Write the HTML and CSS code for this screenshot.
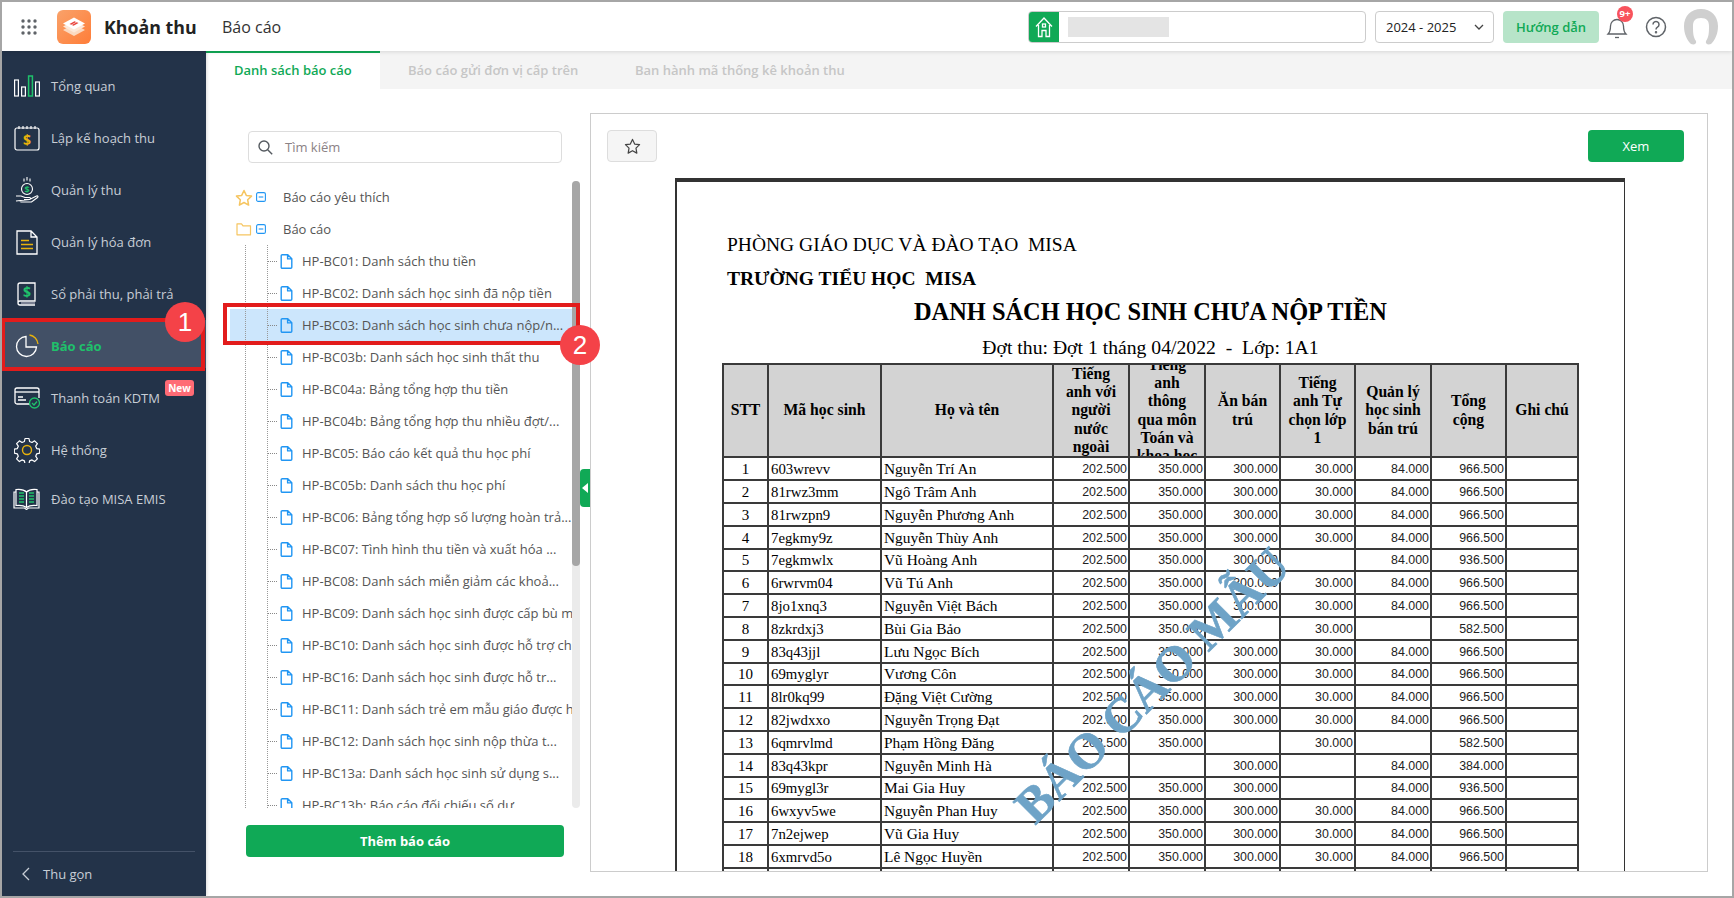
FILE: index.html
```html
<!DOCTYPE html>
<html lang="vi">
<head>
<meta charset="utf-8">
<title>Khoản thu - Báo cáo</title>
<link rel="stylesheet" href="styles.css">
</head>
<body>
<svg class="defs" width="0" height="0">
  <symbol id="file" viewBox="0 0 13 15"><path d="M1.2 1.7a1 1 0 0 1 1-1h5.6l4 4v8.6a1 1 0 0 1-1 1H2.200a1 1 0 0 1-1-1z M7.600 .9v4h4" fill="none" stroke="#2196f3" stroke-width="1.400" stroke-linejoin="round"/></symbol>
  <symbol id="minus" viewBox="0 0 10 10"><rect x=".6" y=".6" width="8.800" height="8.800" rx="1.500" fill="none" stroke="#2196f3" stroke-width="1.100"/><path d="M2.700 5h4.600" stroke="#2196f3" stroke-width="1.100"/></symbol>
</svg>
<div class="app">
  <header class="topbar">
    <svg class="grid-ico" width="16" height="16" viewBox="0 0 16 16" fill="#5f6368"><circle cx="2" cy="2" r="1.700"/><circle cx="8" cy="2" r="1.700"/><circle cx="14" cy="2" r="1.700"/><circle cx="2" cy="8" r="1.700"/><circle cx="8" cy="8" r="1.700"/><circle cx="14" cy="8" r="1.700"/><circle cx="2" cy="14" r="1.700"/><circle cx="8" cy="14" r="1.700"/><circle cx="14" cy="14" r="1.700"/></svg>
    <svg class="logo" width="34" height="34" viewBox="0 0 34 34">
      <defs><linearGradient id="lg" x1="0" y1="0" x2="1" y2="1"><stop offset="0" stop-color="#f9a26a"/><stop offset="1" stop-color="#ff7d38"/></linearGradient></defs>
      <rect width="34" height="34" rx="6" fill="url(#lg)"/>
      <path d="M6 20l11-6 11 6-11 6z" fill="#fbd9c0"/><path d="M6 16.500l11-6 11 6-11 6z" fill="#fde9da"/><path d="M6 13.500l11-6 11 6-11 6z" fill="#fff"/>
      <path d="M12.500 14l5-2.800 1.600.9-4.800 2.600zM21.500 13l-5 2.800-1.600-.9 4.800-2.600z" fill="#e8433c"/>
    </svg>
    <span class="app-name">Khoản thu</span>
    <span class="page-name">Báo cáo</span>
    <div class="school">
      <span class="school-ico"><svg width="18" height="22" viewBox="0 0 18 22" fill="none" stroke="#fff" stroke-width="1.300"><path d="M1 10.500L9 2l8 8.500M3.500 9v11.500h3.500v-6h4v6h3.500V9"/><rect x="7.500" y="8" width="3" height="3"/></svg></span>
      <span class="school-blur"></span>
    </div>
    <div class="year">2024 - 2025<svg width="10" height="6" viewBox="0 0 10 6" fill="none" stroke="#444" stroke-width="1.300"><path d="M1 1l4 4 4-4"/></svg></div>
    <button class="guide">Hướng dẫn</button>
    <div class="bell">
      <svg width="22" height="26" viewBox="0 0 22 26" fill="none" stroke="#5f6368" stroke-width="1.300"><path d="M2 20c2-2 2.500-3.500 2.500-8a6.500 6.500 0 0 1 13 0c0 4.500.5 6 2.500 8z"/><path d="M9 23.500h4"/></svg>
      <span class="bell-badge">9+</span>
    </div>
    <svg class="help" width="22" height="22" viewBox="0 0 22 22" fill="none" stroke="#5f6368" stroke-width="1.500"><circle cx="11" cy="11" r="9.500"/><path d="M8 8.500a3 3 0 1 1 4.500 2.600c-1 .6-1.500 1.100-1.500 2.400"/><circle cx="11" cy="16.300" r=".5" fill="#5f6368"/></svg>
    <svg class="avatar" width="34" height="36" viewBox="0 0 34 36"><path d="M17 0c10 0 17 7 17 17 0 8-3 14-7 18-3 1-6 0-5-3 3-4 3-9 3-15 0-5-2-8-8-8s-8 3-8 8c0 6 0 11 3 15 1 3-2 4-5 3C3 31 0 25 0 17 0 7 7 0 17 0z" fill="#cfcfcf"/></svg>
  </header>
  <div class="main">
    <aside class="sidebar">
      <nav class="menu">
        <a class="item"><span class="ico"><svg width="26" height="22" viewBox="0 0 26 22" fill="none" stroke="#fff" stroke-width="1.200"><rect x=".6" y="5" width="3.800" height="16"/><rect x="7.600" y="12" width="3.800" height="9"/><rect x="14.600" y="1" width="3.800" height="20" stroke="#1fc16b" stroke-width="1.500"/><rect x="21.600" y="7" width="3.800" height="14"/></svg></span>Tổng quan</a>
        <a class="item"><span class="ico"><svg width="26" height="26" viewBox="0 0 26 26" fill="none" stroke="#fff" stroke-width="1.200"><rect x="1" y="3" width="24" height="22" rx="2"/><path d="M5 1v3M9 1v3M13 1v3M17 1v3M21 1v3"/><text x="13" y="20" class="ico-dollar" fill="#e8b20c" stroke="none">$</text></svg></span>Lập kế hoạch thu</a>
        <a class="item"><span class="ico"><svg width="24" height="26" viewBox="0 0 24 26" fill="none" stroke="#fff" stroke-width="1.100"><circle cx="12" cy="12" r="5.500"/><path d="M9 1.500v3M12 0v3.500M15 1.500v3"/><path d="M1 19h5l4 1.500h4.500c1.500 0 1.500 2-.5 2H9m5.500 0l7-3.500c1.500-.5 2 .5 1 1.500l-6 4.500H6l-1.500-1H1z"/><text x="12" y="15.500" class="ico-small" fill="#1fc16b" stroke="none">$</text></svg></span>Quản lý thu</a>
        <a class="item"><span class="ico"><svg width="22" height="25" viewBox="0 0 22 25" fill="none" stroke="#fff" stroke-width="1.300"><path d="M1 1h14l6 6v17H1zM15 1v6h6"/><path d="M5 10.500h8M5 14.500h12M5 18.500h12" stroke="#e8b20c" stroke-width="1.600"/></svg></span>Quản lý hóa đơn</a>
        <a class="item"><span class="ico"><svg width="19" height="25" viewBox="0 0 19 25" fill="none" stroke="#fff" stroke-width="1.300"><path d="M3 1h15v18H3a2 2 0 0 0-2 2V3a2 2 0 0 1 2-2z"/><path d="M1 21a2 2 0 0 0 2 2h15" /><path d="M4 21h14" stroke="#aab"/><text x="10" y="15" class="ico-dollar" fill="#1fc16b" stroke="none">$</text></svg></span>Sổ phải thu, phải trả</a>
        <a class="item active"><span class="ico"><svg width="24" height="24" viewBox="0 0 24 24" fill="none" stroke="#fff" stroke-width="1.300"><path d="M11 2.500a10 10 0 1 0 10.500 10.500H11z"/><path d="M14.500 1a10 10 0 0 1 8.500 9" stroke="#e8b20c"/></svg></span>Báo cáo</a>
        <a class="item"><span class="ico"><svg width="26" height="22" viewBox="0 0 26 22" fill="none" stroke="#fff" stroke-width="1.300"><path d="M16 17H3a2 2 0 0 1-2-2V3a2 2 0 0 1 2-2h20a2 2 0 0 1 2 2v8"/><path d="M1 5h24"/><path d="M4 10h5M4 13h8" stroke-width="1.400"/><circle cx="20.500" cy="16" r="5" stroke="#1fc16b"/><path d="M18 16l2 2 3-3.500" stroke="#1fc16b"/></svg></span>Thanh toán KDTM<span class="new">New</span></a>
        <a class="item"><span class="ico"><svg width="26" height="26" viewBox="0 0 26 26" fill="none" stroke="#fff" stroke-width="1.200"><path d="M11 1.500h4l.6 3 2.400 1 2.600-1.700 2.800 2.800-1.700 2.600 1 2.400 3 .6v4l-3 .6-1 2.400 1.700 2.600-2.800 2.800-2.600-1.700-2.400 1-.6 3h-4l-.6-3-2.400-1-2.600 1.700-2.800-2.800 1.700-2.600-1-2.400-3-.6v-4l3-.6 1-2.400-1.700-2.600 2.800-2.800 2.600 1.700 2.400-1z" stroke-linejoin="round"/><circle cx="13" cy="13" r="4.500" stroke="#e8b20c" stroke-width="1.400"/></svg></span>Hệ thống</a>
        <a class="item training"><span class="ico"><svg width="27" height="22" viewBox="0 0 27 22" fill="none" stroke="#fff" stroke-width="1.200"><path d="M13.500 4C11 1.500 7 1 3 1.500v16c4-.5 8 0 10.500 2 2.500-2 6.500-2.500 10.500-2v-16c-4-.5-8 0-10.500 2.500zM13.500 4v15.500"/><path d="M3 4H1v16h10.500l2 1.500 2-1.500H26V4h-2"/><path d="M6 5h5M6 8h5M6 11h5M6 14h5M16 5h5M16 8h5M16 11h5M16 14h5" stroke="#1fc16b" stroke-width="1.700"/></svg></span>Đào tạo MISA EMIS</a>
      </nav>
      <div class="collapse"><svg width="9" height="14" viewBox="0 0 9 14" fill="none" stroke="#c8ced6" stroke-width="1.300"><path d="M8 1L2 7l6 6"/></svg>Thu gọn</div>
    </aside>
    <section class="content">
      <div class="tabs">
        <span class="tab on">Danh sách báo cáo</span>
        <span class="tab t2">Báo cáo gửi đơn vị cấp trên</span>
        <span class="tab t3">Ban hành mã thống kê khoản thu</span>
      </div>
      <div class="body">
        <div class="pane">
          <div class="search">
            <svg width="15" height="15" viewBox="0 0 15 15" fill="none" stroke="#555a60" stroke-width="1.400"><circle cx="6" cy="6" r="5"/><path d="M9.700 9.700l4.500 4.500"/></svg>
            <span>Tìm kiếm</span>
          </div>
          <div class="treewrap">
            <div class="tree">
              <div class="row root"><svg width="18" height="17" viewBox="0 0 18 17" fill="none" stroke="#f6c560" stroke-width="1.500"><path d="M9 1.500l2.300 4.900 5.200.7-3.800 3.700.9 5.300L9 13.500l-4.600 2.600.9-5.300L1.500 7.100l5.200-.7z" stroke-linejoin="round"/></svg><svg class="m" width="10" height="10"><use href="#minus"/></svg>Báo cáo yêu thích</div>
              <div class="row root"><svg width="18" height="14" viewBox="0 0 18 14" fill="none" stroke="#f6c560" stroke-width="1.200"><path d="M2 1.800h4.500l1.500 2h7.500v9H2z" stroke-linejoin="round"/></svg><svg class="m" width="10" height="10"><use href="#minus"/></svg>Báo cáo</div>
              <div class="row leaf"><i class="elbow"></i><svg width="13" height="15"><use href="#file"/></svg>HP-BC01: Danh sách thu tiền</div>
              <div class="row leaf"><i class="elbow"></i><svg width="13" height="15"><use href="#file"/></svg>HP-BC02: Danh sách học sinh đã nộp tiền</div>
              <div class="row leaf sel"><i class="elbow"></i><svg width="13" height="15"><use href="#file"/></svg>HP-BC03: Danh sách học sinh chưa nộp/n...</div>
              <div class="row leaf"><i class="elbow"></i><svg width="13" height="15"><use href="#file"/></svg>HP-BC03b: Danh sách học sinh thất thu</div>
              <div class="row leaf"><i class="elbow"></i><svg width="13" height="15"><use href="#file"/></svg>HP-BC04a: Bảng tổng hợp thu tiền</div>
              <div class="row leaf"><i class="elbow"></i><svg width="13" height="15"><use href="#file"/></svg>HP-BC04b: Bảng tổng hợp thu nhiều đợt/...</div>
              <div class="row leaf"><i class="elbow"></i><svg width="13" height="15"><use href="#file"/></svg>HP-BC05: Báo cáo kết quả thu học phí</div>
              <div class="row leaf"><i class="elbow"></i><svg width="13" height="15"><use href="#file"/></svg>HP-BC05b: Danh sách thu học phí</div>
              <div class="row leaf"><i class="elbow"></i><svg width="13" height="15"><use href="#file"/></svg>HP-BC06: Bảng tổng hợp số lượng hoàn trả...</div>
              <div class="row leaf"><i class="elbow"></i><svg width="13" height="15"><use href="#file"/></svg>HP-BC07: Tình hình thu tiền và xuất hóa ...</div>
              <div class="row leaf"><i class="elbow"></i><svg width="13" height="15"><use href="#file"/></svg>HP-BC08: Danh sách miễn giảm các khoả...</div>
              <div class="row leaf"><i class="elbow"></i><svg width="13" height="15"><use href="#file"/></svg>HP-BC09: Danh sách học sinh được cấp bù m</div>
              <div class="row leaf"><i class="elbow"></i><svg width="13" height="15"><use href="#file"/></svg>HP-BC10: Danh sách học sinh được hỗ trợ ch</div>
              <div class="row leaf"><i class="elbow"></i><svg width="13" height="15"><use href="#file"/></svg>HP-BC16: Danh sách học sinh được hỗ tr...</div>
              <div class="row leaf"><i class="elbow"></i><svg width="13" height="15"><use href="#file"/></svg>HP-BC11: Danh sách trẻ em mẫu giáo được h</div>
              <div class="row leaf"><i class="elbow"></i><svg width="13" height="15"><use href="#file"/></svg>HP-BC12: Danh sách học sinh nộp thừa t...</div>
              <div class="row leaf"><i class="elbow"></i><svg width="13" height="15"><use href="#file"/></svg>HP-BC13a: Danh sách học sinh sử dụng s...</div>
              <div class="row leaf"><i class="elbow"></i><svg width="13" height="15"><use href="#file"/></svg>HP-BC13b: Báo cáo đối chiếu số dư</div>
            </div>
            <div class="scroll"><div class="thumb"></div></div>
          </div>
          <button class="add">Thêm báo cáo</button>
          <div class="toggle"><svg width="6" height="10" viewBox="0 0 6 10"><path d="M6 0v10L0 5z" fill="#fff"/></svg></div>
        </div>
        <div class="viewer">
          <div class="toolbar">
            <button class="star"><svg width="17" height="16" viewBox="0 0 18 17" fill="none" stroke="#444" stroke-width="1.300"><path d="M9 1.500l2.300 4.900 5.200.7-3.800 3.700.9 5.300L9 13.500l-4.600 2.600.9-5.300L1.500 7.100l5.200-.7z" stroke-linejoin="round"/></svg></button>
            <button class="see">Xem</button>
          </div>
          <div class="paper">
            <div class="doc-line">PHÒNG GIÁO DỤC VÀ ĐÀO TẠO&nbsp; MISA</div>
            <div class="doc-line b">TRƯỜNG TIỂU HỌC&nbsp; MISA</div>
            <div class="doc-title">DANH SÁCH HỌC SINH CHƯA NỘP TIỀN</div>
            <div class="doc-sub">Đợt thu: Đợt 1 tháng 04/2022&nbsp; -&nbsp; Lớp: 1A1</div>
            <table class="report">
              <colgroup><col class="c1"><col class="c2"><col class="c3"><col class="c4"><col class="c4"><col class="c5"><col class="c5"><col class="c4"><col class="c5"><col class="c6"></colgroup>
              <thead><tr>
                <th>STT</th><th>Mã học sinh</th><th>Họ và tên</th>
                <th><div class="clip">Tiếng anh với người nước ngoài</div></th>
                <th><div class="clip">Tiếng anh thông qua môn Toán và khoa học</div></th>
                <th>Ăn bán trú</th><th>Tiếng anh Tự chọn lớp 1</th><th>Quản lý học sinh bán trú</th><th>Tổng cộng</th><th>Ghi chú</th>
              </tr></thead>
              <tbody>
                <tr><td>1</td><td>603wrevv</td><td>Nguyễn Trí An</td><td>202.500</td><td>350.000</td><td>300.000</td><td>30.000</td><td>84.000</td><td>966.500</td><td></td></tr>
                <tr><td>2</td><td>81rwz3mm</td><td>Ngô Trâm Anh</td><td>202.500</td><td>350.000</td><td>300.000</td><td>30.000</td><td>84.000</td><td>966.500</td><td></td></tr>
                <tr><td>3</td><td>81rwzpn9</td><td>Nguyễn Phương Anh</td><td>202.500</td><td>350.000</td><td>300.000</td><td>30.000</td><td>84.000</td><td>966.500</td><td></td></tr>
                <tr><td>4</td><td>7egkmy9z</td><td>Nguyễn Thùy Anh</td><td>202.500</td><td>350.000</td><td>300.000</td><td>30.000</td><td>84.000</td><td>966.500</td><td></td></tr>
                <tr><td>5</td><td>7egkmwlx</td><td>Vũ Hoàng Anh</td><td>202.500</td><td>350.000</td><td>300.000</td><td></td><td>84.000</td><td>936.500</td><td></td></tr>
                <tr><td>6</td><td>6rwrvm04</td><td>Vũ Tú Anh</td><td>202.500</td><td>350.000</td><td>300.000</td><td>30.000</td><td>84.000</td><td>966.500</td><td></td></tr>
                <tr><td>7</td><td>8jo1xnq3</td><td>Nguyễn Việt Bách</td><td>202.500</td><td>350.000</td><td>300.000</td><td>30.000</td><td>84.000</td><td>966.500</td><td></td></tr>
                <tr><td>8</td><td>8zkrdxj3</td><td>Bùi Gia Bảo</td><td>202.500</td><td>350.000</td><td></td><td>30.000</td><td></td><td>582.500</td><td></td></tr>
                <tr><td>9</td><td>83q43jjl</td><td>Lưu Ngọc Bích</td><td>202.500</td><td>350.000</td><td>300.000</td><td>30.000</td><td>84.000</td><td>966.500</td><td></td></tr>
                <tr><td>10</td><td>69myglyr</td><td>Vương Côn</td><td>202.500</td><td>350.000</td><td>300.000</td><td>30.000</td><td>84.000</td><td>966.500</td><td></td></tr>
                <tr><td>11</td><td>8lr0kq99</td><td>Đặng Việt Cường</td><td>202.500</td><td>350.000</td><td>300.000</td><td>30.000</td><td>84.000</td><td>966.500</td><td></td></tr>
                <tr><td>12</td><td>82jwdxxo</td><td>Nguyễn Trọng Đạt</td><td>202.500</td><td>350.000</td><td>300.000</td><td>30.000</td><td>84.000</td><td>966.500</td><td></td></tr>
                <tr><td>13</td><td>6qmrvlmd</td><td>Phạm Hồng Đăng</td><td>202.500</td><td>350.000</td><td></td><td>30.000</td><td></td><td>582.500</td><td></td></tr>
                <tr><td>14</td><td>83q43kpr</td><td>Nguyễn Minh Hà</td><td></td><td></td><td>300.000</td><td></td><td>84.000</td><td>384.000</td><td></td></tr>
                <tr><td>15</td><td>69mygl3r</td><td>Mai Gia Huy</td><td>202.500</td><td>350.000</td><td>300.000</td><td></td><td>84.000</td><td>936.500</td><td></td></tr>
                <tr><td>16</td><td>6wxyv5we</td><td>Nguyễn Phan Huy</td><td>202.500</td><td>350.000</td><td>300.000</td><td>30.000</td><td>84.000</td><td>966.500</td><td></td></tr>
                <tr><td>17</td><td>7n2ejwep</td><td>Vũ Gia Huy</td><td>202.500</td><td>350.000</td><td>300.000</td><td>30.000</td><td>84.000</td><td>966.500</td><td></td></tr>
                <tr><td>18</td><td>6xmrvd5o</td><td>Lê Ngọc Huyền</td><td>202.500</td><td>350.000</td><td>300.000</td><td>30.000</td><td>84.000</td><td>966.500</td><td></td></tr>
                <tr><td></td><td></td><td></td><td></td><td></td><td></td><td></td><td></td><td></td><td></td></tr>
              </tbody>
            </table>
            <div class="watermark">BÁO CÁO MẪU</div>
          </div>
        </div>
      </div>
    </section>
  </div>
  <div class="mark mark1"></div>
  <div class="mark mark2"></div>
  <div class="bubble b1">1</div>
  <div class="bubble b2">2</div>
</div>
</body>
</html>
```
FILE: styles.css
```css
* { box-sizing: border-box; }
html, body { margin: 0; height: 100%; }
body { font-family: "Open Sans", sans-serif; font-size: 13px; color: #444; overflow: hidden; }
.defs { position: absolute; }
.app { position: relative; width: 1734px; height: 898px; border: 2px solid #a6a6a6; display: flex; flex-direction: column; background: #fff; overflow: hidden; }

/* top bar */
.topbar { height: 49px; flex: none; display: flex; align-items: center; background: #fff; box-shadow: 0 1px 4px rgba(0,0,0,.12); position: relative; z-index: 2; padding-left: 19px; }
.grid-ico { margin-right: 20px; }
.logo { margin-right: 13px; }
.app-name { font-size: 17.800px; font-weight: 700; color: #222; width: 118px; }
.page-name { font-size: 16px; color: #333; width: 806px; }
.school { width: 338px; height: 32px; border: 1px solid #ccc; border-radius: 4px; display: flex; align-items: center; overflow: hidden; }
.school-ico { width: 31px; height: 32px; margin-left: -1px; background: #10a956; display: flex; align-items: center; justify-content: center; }
.school-blur { width: 101px; height: 20px; margin-left: 9px; background: #e4e4e4; }
.year { width: 119px; height: 32px; margin-left: 9px; border: 1px solid #ccc; border-radius: 4px; display: flex; align-items: center; justify-content: space-between; padding: 0 9px 0 10px; font-size: 13px; color: #222; }
.guide { width: 96px; height: 32px; margin-left: 9px; border: 0; border-radius: 4px; background: #b7e4c9; color: #10a956; font: 600 13px "Open Sans", sans-serif; }
.bell { position: relative; width: 22px; height: 26px; margin-left: 7px; }
.bell-badge { position: absolute; left: 11px; top: -8px; width: 16px; height: 16px; border-radius: 50%; background: #f8535c; color: #fff; font-size: 9.500px; font-weight: 700; line-height: 16px; text-align: center; }
.help { margin-left: 17px; }
.avatar { margin-left: 17px; }

/* layout */
.main { flex: 1; display: flex; min-height: 0; }

/* sidebar */
.sidebar { width: 204px; flex: none; background: #233349; display: flex; flex-direction: column; padding-top: 9px; box-shadow: 1px 0 3px rgba(0,0,0,.15); position: relative; z-index: 1; }
.menu { flex: 1; }
.item { position: relative; height: 52px; display: flex; align-items: center; color: #c8ced6; font-size: 13px; }
.ico { width: 49px; display: flex; justify-content: center; padding: 0 1px; flex: none; }
.ico svg { display: block; }
.item.active { color: #1fc16b; font-weight: 700; background: linear-gradient(#425066, #425066) 0 0 / 100% 48px no-repeat; }
.item.training { height: 46px; }
.ico-dollar { font: 700 14px "Open Sans", sans-serif; text-anchor: middle; }
.ico-small { font: 700 9px "Open Sans", sans-serif; text-anchor: middle; }
.new { position: absolute; left: 163px; top: 8px; width: 29px; height: 16px; border-radius: 3px; background: #ff6b75; color: #fff; font-size: 10px; font-weight: 700; line-height: 16px; text-align: center; }
.collapse { margin: 0 11px; height: 45px; border-top: 1px solid #445268; display: flex; align-items: center; gap: 13px; padding-left: 8px; color: #c8ced6; font-size: 13px; }

/* tabs */
.content { flex: 1; display: flex; flex-direction: column; min-width: 0; }
.tabs { height: 38px; flex: none; background: #f4f4f4; display: flex; align-items: center; font-weight: 600; color: #c6c6c6; font-size: 13px; }
.tab { height: 38px; line-height: 38px; }
.tab.on { width: 174px; background: #fff; border-top: 2px solid #10a956; color: #10a956; padding-left: 28px; line-height: 35px; }
.tab.t2 { margin-left: 28px; width: 227px; }

/* tree pane */
.body { flex: 1; display: flex; min-height: 0; }
.pane { position: relative; width: 384px; flex: none; display: flex; flex-direction: column; padding-top: 42px; }
.search { width: 314px; height: 32px; margin-left: 42px; border: 1px solid #ddd; border-radius: 4px; display: flex; align-items: center; gap: 12px; padding-left: 9px; color: #8b8285; }
.treewrap { margin: 18px 0 0 24px; width: 350px; height: 627px; display: flex; }
.tree { flex: 1; overflow: hidden; min-width: 0; }
.row { height: 32px; display: flex; align-items: center; white-space: nowrap; color: #555; font-size: 13px; }
.root { padding-left: 5px; }
.root svg:first-child { margin-right: 3px; width: 18px; }
.root .m { margin-right: 17px; }
.leaf {
  padding-left: 38px;
  background-image: linear-gradient(#999 50%, transparent 50%), linear-gradient(#999 50%, transparent 50%);
  background-size: 1px 2px, 1px 2px;
  background-position: 15px 0, 37px 0;
  background-repeat: repeat-y;
}
.leaf.sel { background-color: #cce6fc; }
.elbow { width: 9px; border-top: 1px dotted #888; margin-right: 3px; flex: none; }
.leaf svg { margin-right: 9px; flex: none; }
.scroll { width: 8px; flex: none; background: #ebebeb; border-radius: 4px; }
.thumb { height: 385px; background: #a6a6a6; border-radius: 4px; }
.add { width: 318px; height: 32px; margin: 17px 0 0 40px; border: 0; border-radius: 4px; background: #10a956; color: #fff; font: 700 13px "Open Sans", sans-serif; }
.toggle { position: absolute; right: 0; top: 380px; width: 10px; height: 38px; background: #10a956; border-radius: 4px 0 0 4px; display: flex; align-items: center; justify-content: center; }

/* viewer */
.viewer { flex: 1; margin: 24px 24px 24px 0; border: 1px solid #ccc; padding: 16px 0 0 84px; display: flex; flex-direction: column; overflow: hidden; min-width: 0; }
.toolbar { height: 32px; flex: none; display: flex; justify-content: space-between; margin-left: -68px; padding-right: 23px; }
.star { width: 50px; height: 32px; background: #f5f5f5; border: 1px solid #ddd; border-radius: 4px; display: flex; align-items: center; justify-content: center; padding: 0; }
.see { width: 96px; height: 32px; background: #10a956; border: 0; border-radius: 4px; color: #fff; font: 400 13px "Open Sans", sans-serif; }

/* report paper */
.paper { position: relative; width: 950px; margin-top: 16px; flex: 1; min-height: 0; border-top: 4px solid #333; border-left: 2px solid #333; border-right: 1px solid #333; padding-top: 46px; overflow: hidden; font-family: "Liberation Serif", serif; color: #000; }
.doc-line { height: 34px; line-height: 34px; padding-left: 50px; font-size: 19.500px; white-space: nowrap; }
.doc-line.b { font-weight: 700; height: 33px; }
.doc-title { height: 35px; line-height: 34px; text-align: center; font-size: 24.400px; font-weight: 700; white-space: nowrap; }
.doc-sub { height: 33px; line-height: 34px; text-align: center; font-size: 19.700px; white-space: nowrap; }
.report { width: 855px; margin-left: 45px; border-collapse: collapse; table-layout: fixed; }
.c1 { width: 45px; } .c2 { width: 113px; } .c3 { width: 172px; } .c4 { width: 76px; } .c5 { width: 75px; } .c6 { width: 72px; }
.report th, .report td { border: 2px solid #3a3a3a; padding: 0; }
.report th { height: 93px; padding: 0 6px; background: #d3d3d3; font-size: 15.700px; line-height: 18.300px; font-weight: 700; text-align: center; overflow: hidden; }
.report th:first-child { padding: 0; }
.clip { height: 91px; overflow: hidden; display: flex; align-items: center; justify-content: center; }
.report td { height: 23px; font-size: 15px; line-height: 16px; overflow: hidden; white-space: nowrap; padding: 0 1px 0 2px; }
.report tr:nth-child(5n) td { height: 22px; }
.report td:first-child { text-align: center; padding: 0; }
.report td:nth-child(2) { font-size: 14.800px; }
.report td:nth-child(3) { font-size: 15.400px; }
.report td:nth-child(n+4) { font-family: "Liberation Sans", sans-serif; font-size: 12.400px; text-align: right; color: #222; }
.watermark { position: absolute; left: 275px; top: 477px; width: 400px; line-height: 52px; text-align: center; white-space: nowrap; font-size: 50px; font-weight: 700; color: #6ea3c7; -webkit-text-stroke: .6px #6ea3c7; transform: rotate(-45deg); }

/* annotations */
.mark { position: absolute; border: 4px solid #e21c1c; pointer-events: none; z-index: 3; }
.mark1 { left: -1px; top: 316px; width: 204px; height: 53px; }
.mark2 { left: 221px; top: 301px; width: 357px; height: 42px; }
.bubble { position: absolute; width: 40px; height: 40px; border-radius: 50%; background: #f44248; color: #fff; font: 400 26px/40px "Liberation Sans", sans-serif; text-align: center; z-index: 4; }
.b1 { left: 163px; top: 300px; }
.b2 { left: 558px; top: 323px; }
```
